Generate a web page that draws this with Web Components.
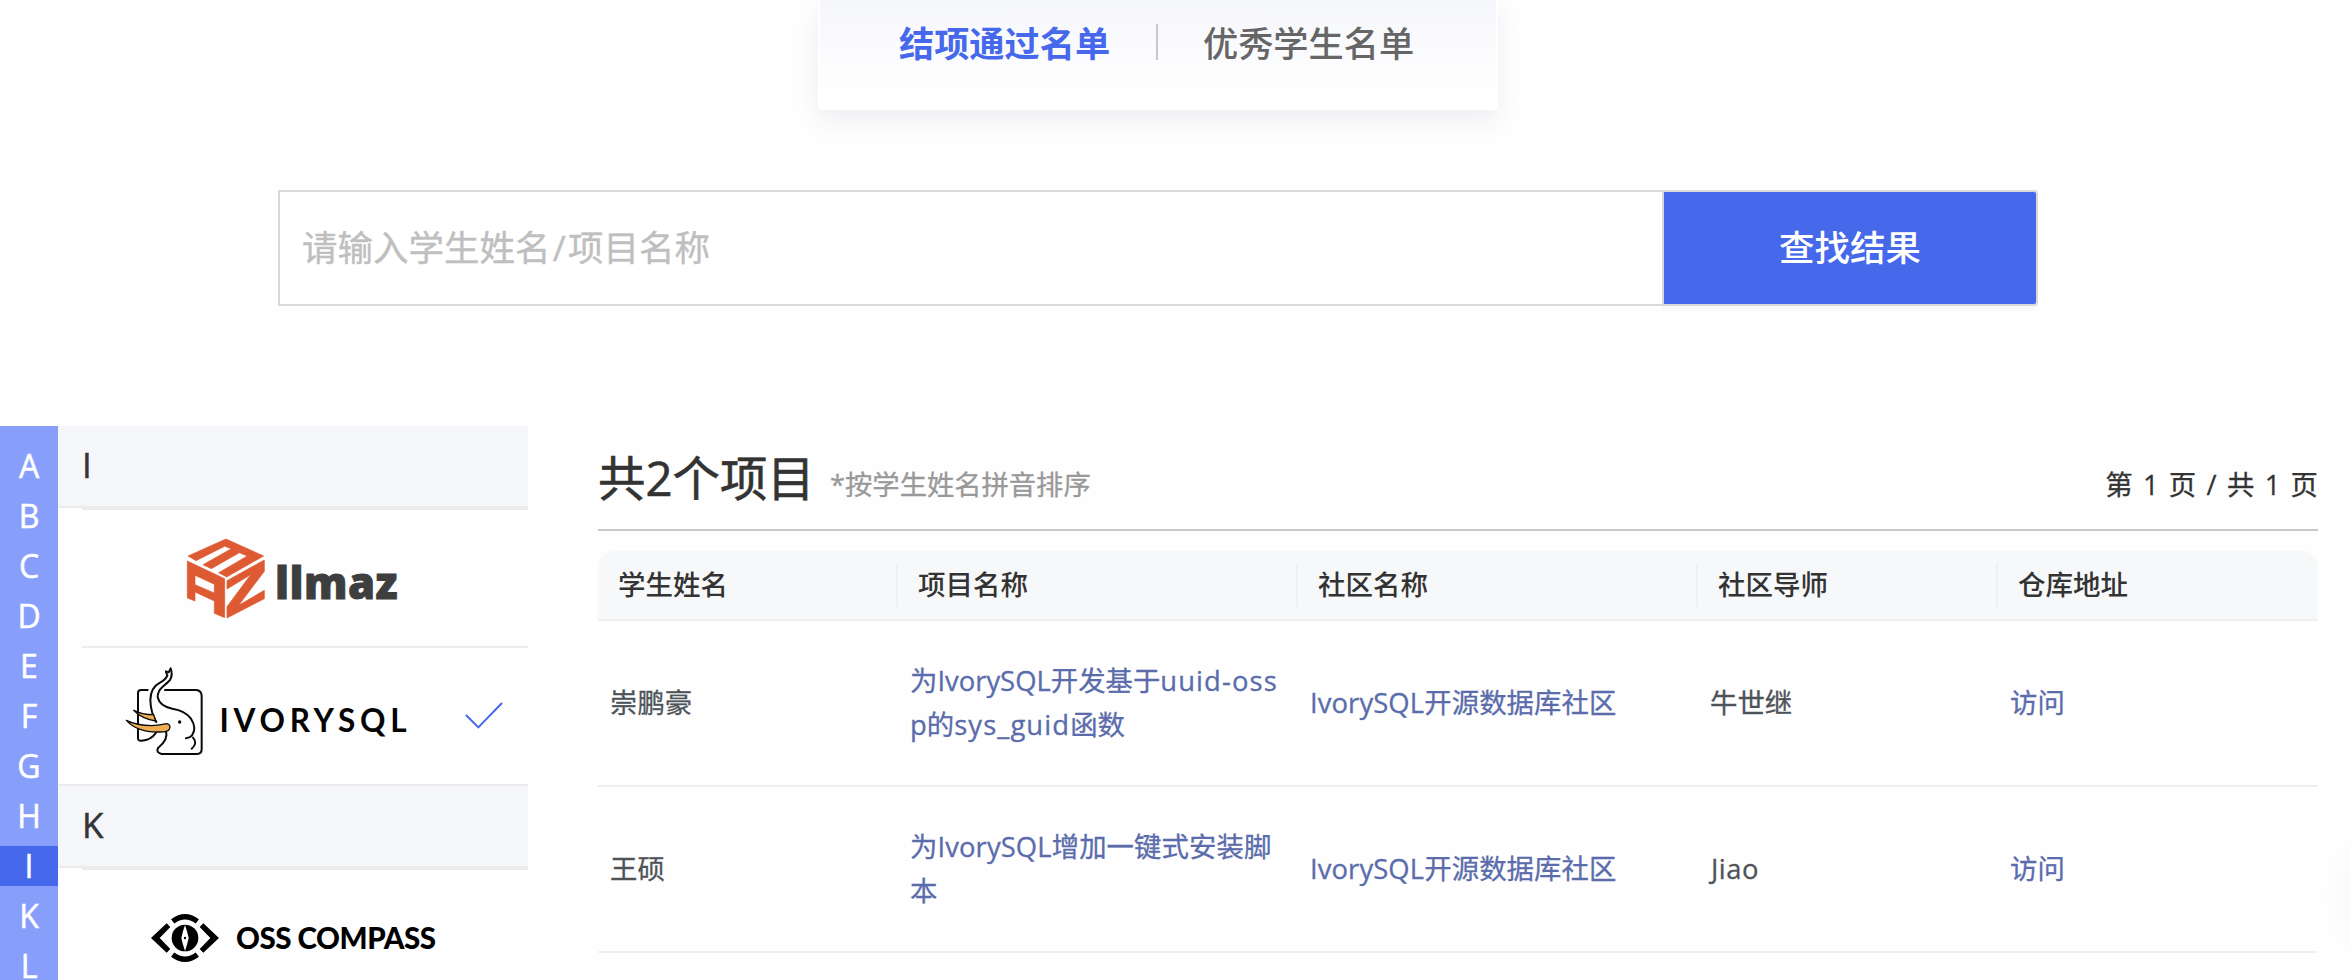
<!DOCTYPE html>
<html lang="zh-CN">
<head>
<meta charset="utf-8">
<title>结项通过名单</title>
<style>
html,body{margin:0;height:980px;overflow:hidden;background:#fefefe}
body{font-family:"Open Sans","Noto Sans CJK SC",sans-serif;color:#333}
</style>
</head>
<body>
<result-page></result-page>
<script>
const define = (name, html) => {
  const tpl = document.createElement('template');
  tpl.innerHTML = html;
  customElements.define(name, class extends HTMLElement {
    constructor() {
      super();
      this.attachShadow({mode: 'open'}).append(tpl.content.cloneNode(true));
    }
  });
};

define('result-tabs', `
<style>
:host{display:flex;box-sizing:border-box;width:680px;height:110px;margin-left:818px;padding-left:79px;padding-top:22px;border:2px solid #fff;border-top:0;border-radius:0 0 4px 4px;background:linear-gradient(#f6f7fb,#fff 100px);box-shadow:0 10px 24px rgba(40,50,90,.08)}
span{font-size:35.2px;line-height:43px;white-space:nowrap}
.on{color:#4668ea;font-weight:700;width:213px}
i{width:2px;height:36px;margin:2px 46px 0 44px;background:#c5c8d0}
.off{color:#666;font-weight:500;margin-left:-1px}
</style>
<span class="on">结项通过名单</span><i></i><span class="off">优秀学生名单</span>`);

define('search-bar', `
<style>
:host{display:flex;box-sizing:border-box;width:1760px;height:116px;margin:80px 0 0 278px}
.in{box-sizing:border-box;width:1384px;border:2px solid #d9d9d9;border-right:0;background:#fff;padding-left:22px;font-size:35.5px;line-height:111px;color:#bfbfbf;white-space:nowrap;-webkit-text-stroke:.4px}
.btn{box-sizing:border-box;width:376px;border:2px solid #d9d9d9;border-radius:0 4px 4px 0;background:#4668ea;color:#fff;text-align:center;font-size:35.5px;font-weight:500;line-height:111px;box-shadow:0 4px 0 rgba(0,0,0,.02)}
.sl{margin:0 2.2px}
</style>
<div class="in">请输入学生姓名<span class="sl">/</span>项目名称</div><div class="btn">查找结果</div>`);

customElements.define('letter-rail', class extends HTMLElement {
  constructor() {
    super();
    this.attachShadow({mode: 'open'}).innerHTML = `
<style>
:host{display:flex;flex-direction:column;gap:10px;box-sizing:border-box;width:58px;height:554px;padding-top:20px;background:#889efb;color:#fff}
b{flex:none;height:40px;line-height:40px;font-size:32px;font-weight:500;text-align:center;-webkit-text-stroke:.5px}
.on{background:#4668ea}
</style>` + [...'ABCDEFGHIKL'].map(c => `<b class="${c === 'I' ? 'on' : ''}">${c}</b>`).join('');
  }
});

define('group-head', `
<style>
:host{display:block;box-sizing:border-box;height:82px;padding-left:24px;background:#f5f6fa;border-bottom:2px solid #ececec;font-size:35px;line-height:78px;color:#333;-webkit-text-stroke:.5px}
:host([line]){height:84px;border-top:2px solid #ececec}
</style><slot></slot>`);

define('community-item', `
<style>:host{display:block;box-sizing:border-box;height:138px;margin-left:24px;border-top:2px solid #ececec}</style>
<slot></slot>`);

define('logo-llmaz', `
<style>:host,svg{display:block}text{font:800 43.5px "Open Sans";fill:#3e3e3e;stroke:#3e3e3e;stroke-width:.9px}</style>
<svg width="446" height="136">
<g transform="translate(-82 -100) scale(.33333)" fill="#dd5a32" stroke="#dd5a32" stroke-width="2" stroke-linejoin="round">
<path d="M564 438L678 387L791 438L680 501L656 488L742 438L718 428L634 476L609 464L694 416L674 409L588 452Z"/>
<path fill-rule="evenodd" d="M562 453L674 506V623L643 610V573L585 546V573L562 564ZM585 496V524L643 549V523Z"/>
<path d="M681 512L793 450V484L716 586L793 541V566L681 624V590L752 494L681 537Z"/>
</g>
<text x="193" y="89.3" textLength="122.500">llmaz</text>
</svg>`);

define('logo-ivory', `
<style>:host,svg{display:block}text{font:700 31.5px Lato,sans-serif;fill:#050505}</style>
<svg width="446" height="136">
<g transform="translate(28 2) scale(.33333)" fill="none" stroke="#0a0a0a" stroke-width="6" stroke-linecap="round" stroke-linejoin="round">
<path d="M113 120H93Q84 120 84 129V264Q84 273 94 272Q124 270 138 248"/>
<path d="M165 120H258Q275 121 275 138V298Q275 312 261 312H155Q137 308 144 294Q176 268 168 244"/>
<path d="M168 66L172 76Q168 88 150 98Q122 112 121 150Q122 188 139 216"/>
<path d="M168 64L176 67L182 55Q189 74 180 90Q172 99 158 110Q142 124 143 142Q149 169 187 176Q226 182 243 206Q261 234 246 256Q240 264 228 265"/>
<path d="M249 263Q264 280 245 296"/>
<circle cx="209" cy="216" r="3" fill="#0a0a0a" stroke-width="4"/>
<g fill="#f1ad53" stroke-width="4"><path d="M71 181Q96 194 131 194L137 213Q96 207 71 181Z"/>
<path d="M49 211Q80 226 125 227Q150 225 170 221Q184 224 178 238Q173 247 145 246Q82 247 49 211Z"/></g>
</g>
<text x="137.500" y="83.7" textLength="187">IVORYSQL</text>
<path d="M384 67L396.300 79.400L420 55" fill="none" stroke="#4668ea" stroke-width="2"/>
</svg>`);

define('logo-compass', `
<style>:host,svg{display:block}text{font:900 29.5px Lato,sans-serif;fill:#000}</style>
<svg width="446" height="136">
<g transform="translate(28 -90) scale(.33333)">
<path d="M123 474L170 430L181 441L149 474L181 507L170 518ZM327 474L280 430L269 441L301 474L269 507L280 518Z"/>
<path d="M188 424Q225 396 262 424M188 524Q225 552 262 524" fill="none" stroke="#000" stroke-width="16"/>
<circle cx="225" cy="474" r="40"/>
<path d="M225 435Q232 455 236 474Q232 493 225 513Q218 493 214 474Q218 455 225 435Z" fill="#fff"/>
<circle cx="225" cy="474" r="3.500"/>
</g>
<text x="154" y="78.700" textLength="200">OSS COMPASS</text>
</svg>`);

define('community-list', `
<style>:host{display:block;width:470px}</style>
<group-head>I</group-head>
<community-item><logo-llmaz></logo-llmaz></community-item>
<community-item><logo-ivory></logo-ivory></community-item>
<group-head line>K</group-head>
<community-item><logo-compass></logo-compass></community-item>`);

define('project-row', `
<style>
:host{display:grid;grid-template-columns:300px 400px 400px 300px 320px;align-items:center;box-sizing:border-box;height:166px;border-bottom:2px solid #f0f0f0;font-size:27.4px;line-height:44px;color:#4e5358;-webkit-text-stroke:.3px}
::slotted(*){display:block;padding:0 12px;white-space:nowrap}
::slotted(a){color:#5a6cab}
</style><slot></slot>`);

define('project-head', `
<style>
:host{display:grid;grid-template-columns:300px 400px 400px 300px 320px;align-items:center;box-sizing:border-box;height:70px;margin-top:20px;border-bottom:2px solid #eeeff1;border-radius:16px 16px 0 0;background:#f7f8fa;font-size:27.5px;line-height:44px;font-weight:500;color:#333}
span{box-sizing:border-box;height:44px;padding-left:20px;border-right:2px solid #eff0f2;line-height:43px}
span:last-child{border:0}
</style>
<span>学生姓名</span><span>项目名称</span><span>社区名称</span><span>社区导师</span><span>仓库地址</span>`);

define('project-panel', `
<style>
:host{display:block;width:1720px;margin-left:70px}
header{display:flex;box-sizing:border-box;height:105px;border-bottom:2px solid #c9c9c9;white-space:nowrap;-webkit-text-stroke:.3px}
h1{margin:0;font-weight:400;font-size:47.4px;line-height:104px;color:#333;width:232px;-webkit-text-stroke:.6px}
small{font-size:27.3px;line-height:118px;color:#999}
.pg{margin-left:auto;font-size:27.4px;line-height:118px;color:#333;word-spacing:3.200px}
.w{letter-spacing:1.100px}
.j{letter-spacing:.5px;padding-left:13px}
.c{letter-spacing:.100px}
</style>
<header><h1>共2个项目</h1><small>*按学生姓名拼音排序</small><span class="pg">第 1 页 / 共 1 页</span></header>
<project-head></project-head>
<project-row><span>崇鹏豪</span><a>为IvorySQL开发基于<span class="w">uuid-oss</span><br>p的<span class="w">sys_guid</span>函数</a><a class="c">IvorySQL开源数据库社区</a><span>牛世继</span><a>访问</a></project-row>
<project-row><span>王硕</span><a class="c">为IvorySQL增加一键式安装脚<br>本</a><a class="c">IvorySQL开源数据库社区</a><span class="j">Jiao</span><a>访问</a></project-row>`);

/* Floating toolbox parked past the right edge; only its shadow reaches the page. */
define('side-float', `
<style>:host{position:absolute;left:2356px;top:850px;width:80px;height:92px;border-radius:40px;box-shadow:0 0 44px rgba(0,0,0,.06)}</style>`);

define('result-page', `
<style>
:host{display:block;position:relative;width:2350px;height:980px;overflow:hidden}
main{display:flex;margin-top:120px}
</style>
<result-tabs></result-tabs>
<search-bar></search-bar>
<main><letter-rail></letter-rail><community-list></community-list><project-panel></project-panel></main>
<side-float></side-float>`);
</script>
</body>
</html>
